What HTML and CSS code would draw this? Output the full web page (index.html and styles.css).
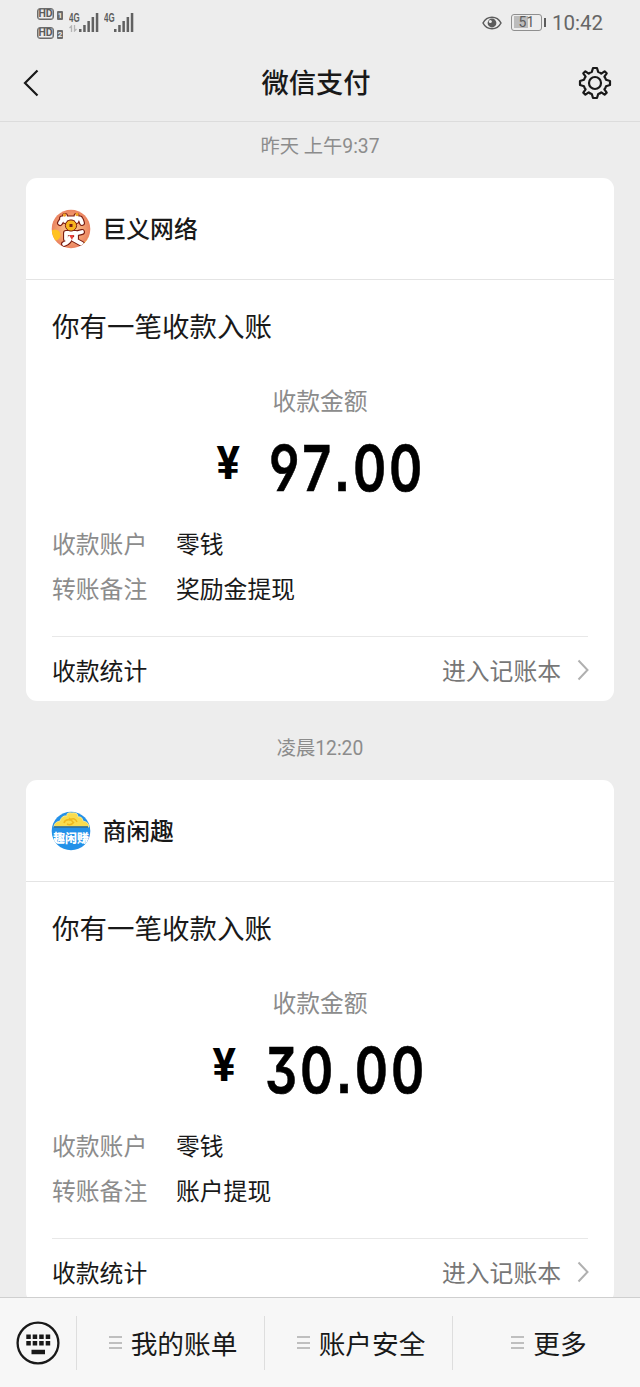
FILE: index.html
```html
<!DOCTYPE html>
<html lang="zh-CN">
<head>
<meta charset="utf-8">
<title>微信支付</title>
<link rel="stylesheet" href="styles.css">
</head>
<body>
<div class="app">
  <div class="status">
    <div class="hd-list">
      <div class="hd"><span class="hd-box">HD</span><span class="hd-num">1</span></div>
      <div class="hd"><span class="hd-box">HD</span><span class="hd-num">2</span></div>
    </div>
    <div class="signal">
      <div class="net"><span>4G</span>
        <svg width="8" height="7" viewBox="0 0 8 7" fill="none" stroke="#b5b5b5" stroke-width="1.3"><path d="M2.5 7V1L.5 3M5.5 0v6l2-2"/></svg>
      </div>
      <svg class="bars" width="20" height="19" viewBox="0 0 20 19" fill="#616161"><path d="M0 16h2.500v3H0zM4.200 12h2.500v7H4.200zM8.400 8h2.500v11H8.400zM12.600 4h2.500v15h-2.500zM16.800 0h2.500v19h-2.500z"/></svg>
    </div>
    <div class="signal second">
      <div class="net"><span>4G</span></div>
      <svg class="bars" width="20" height="19" viewBox="0 0 20 19" fill="#616161"><path d="M0 16h2.500v3H0zM4.200 12h2.500v7H4.200zM8.400 8h2.500v11H8.400zM12.600 4h2.500v15h-2.500zM16.800 0h2.500v19h-2.500z"/></svg>
    </div>
    <div class="status-right">
      <svg width="20" height="14" viewBox="0 0 20 14" fill="none" stroke="#5c5c5c" stroke-width="1.5"><path d="M1 7C5-.7 15-.7 19 7 15 14.700 5 14.700 1 7z"/><circle cx="10" cy="7" r="4.400" fill="#5c5c5c" stroke="none"/><circle cx="8.300" cy="5.600" r="1.500" fill="#ededed" stroke="none"/></svg>
      <div class="battery"><span>51</span></div><i class="battery-tip"></i>
      <span class="clock">10:42</span>
    </div>
  </div>
  <div class="nav">
    <svg class="back" width="16" height="28" viewBox="0 0 16 28" fill="none" stroke="#191919" stroke-width="2.200"><path d="M14.500 1.500 2 14l12.500 12.500"/></svg>
    <h1>微信支付</h1>
    <svg class="gear" width="34" height="34" viewBox="-17 -17 34 34" fill="none" stroke="#191919" stroke-width="2.200" stroke-linejoin="round">
      <path d="M-2 -15H2L3.200 -11Q5 -10.600 6.300 -9.400L9.600 -11.700 11.700 -9.600 9.400 -6.300Q10.600 -5 11 -3.200L15 -2V2L11 3.200Q10.600 5 9.400 6.300L11.700 9.600 9.600 11.700 6.300 9.400Q5 10.600 3.200 11L2 15H-2L-3.200 11Q-5 10.600 -6.300 9.400L-9.600 11.700 -11.700 9.600 -9.400 6.300Q-10.600 5 -11 3.200L-15 2V-2L-11 -3.200Q-10.600 -5 -9.400 -6.300L-11.700 -9.600 -9.600 -11.700 -6.300 -9.400Q-5 -10.600 -3.200 -11Z"/>
      <circle r="6"/>
    </svg>
  </div>
  <div class="feed">
    <div class="time first">昨天 上午9:37</div>
    <div class="card">
      <div class="card-head">
        <svg class="avatar" width="40" height="40" viewBox="0 0 40 40">
          <defs><radialGradient id="peach"><stop offset="0" stop-color="#ffd39a"/><stop offset=".6" stop-color="#f3a172"/><stop offset="1" stop-color="#e9805f"/></radialGradient><clipPath id="round"><circle cx="20" cy="20" r="19.300"/></clipPath></defs>
          <g clip-path="url(#round)"><rect width="40" height="40" fill="url(#peach)"/>
          <circle cx="4" cy="26" r="5.500" fill="#ffc21f"/><path d="M30 34q6-1 8-7v10z" fill="#f9c63c"/>
          <g fill="none" stroke-linecap="round" stroke-linejoin="round"><g stroke="#7b1d12" stroke-width="6"><path d="M11 9.500h18M14 7v5M25.500 7v5M9 14l2-3M31 14l-1-3M15 24h10v6M15 24v6M19 28q0 5-6 7M22 30l9 5M27 24l4-1"/></g>
          <g stroke="#fff" stroke-width="3.800"><path d="M11 9.500h18M14 7v5M25.500 7v5M9 14l2-3M31 14l-1-3M15 24h10v6M15 24v6M19 28q0 5-6 7M22 30l9 5M27 24l4-1"/></g></g>
          <circle cx="13.500" cy="6" r="1.700" fill="#f0a328"/><circle cx="26" cy="5.500" r="1.700" fill="#f0a328"/>
          <circle cx="20" cy="16.500" r="5.600" fill="#f7b51d" stroke="#7b1d12"/><rect x="18.500" y="15" width="3" height="3" fill="#7b1d12"/><path d="M18 26h5l-2 5z" fill="#e5403b"/></g>
        </svg>
        <h2>巨义网络</h2>
      </div>
      <div class="card-body">
        <div class="headline">你有一笔收款入账</div>
        <div class="label-center">收款金额</div>
        <div class="amount"><span class="yen">¥</span><span class="digits">97.00</span></div>
        <dl>
          <dt>收款账户</dt><dd>零钱</dd>
          <dt>转账备注</dt><dd>奖励金提现</dd>
        </dl>
        <div class="card-foot"><span>收款统计</span><span class="link">进入记账本</span>
          <svg width="12" height="22" viewBox="0 0 12 22" fill="none" stroke="#b0b0b0" stroke-width="2"><path d="M1.500 1.500 10.500 11l-9 9.500"/></svg></div>
      </div>
    </div>
    <div class="time">凌晨12:20</div>
    <div class="card">
      <div class="card-head">
        <svg class="avatar" width="40" height="40" viewBox="0 0 40 40">
          <g clip-path="url(#round)"><rect width="40" height="40" fill="#2491e8"/>
          <path d="M3 16q0-5 6-6Q11 4 16 5q-1-4 5-3 6-1 6 4 4-1 5 4 6 1 6 6z" fill="#f9dc4e" stroke="#fff0a0" stroke-width=".8"/><path d="M13 12q1-4 6-3 5-3 7 2M16 13q4 2 7-2M18 7l4 4" fill="none" stroke="#eeb81e" stroke-width="1.500"/><path d="M3 16h34" stroke="#176098" stroke-width="1.500"/>
          <text class="logo-text" x="20" y="32" text-anchor="middle">趣闲赚</text></g>
        </svg>
        <h2>商闲趣</h2>
      </div>
      <div class="card-body">
        <div class="headline">你有一笔收款入账</div>
        <div class="label-center">收款金额</div>
        <div class="amount"><span class="yen">¥</span><span class="digits">30.00</span></div>
        <dl>
          <dt>收款账户</dt><dd>零钱</dd>
          <dt>转账备注</dt><dd>账户提现</dd>
        </dl>
        <div class="card-foot"><span>收款统计</span><span class="link">进入记账本</span>
          <svg width="12" height="22" viewBox="0 0 12 22" fill="none" stroke="#b0b0b0" stroke-width="2"><path d="M1.500 1.500 10.500 11l-9 9.500"/></svg></div>
      </div>
    </div>
  </div>
  <div class="menu">
    <div class="keyboard">
      <svg width="44" height="44" viewBox="0 0 44 44"><circle cx="22" cy="22" r="20.400" fill="none" stroke="#191919" stroke-width="2.300"/><path d="M10.300 13.500h4.500v4.500h-4.500zM16.700 13.500h4.500v4.500h-4.500zM23.200 13.500h4.500v4.500h-4.500zM29.700 13.500h4.500v4.500h-4.500zM10.300 20h4.500v4.500h-4.500zM16.700 20h4.500v4.500h-4.500zM23.200 20h4.500v4.500h-4.500zM29.700 20h4.500v4.500h-4.500zM15.500 28.800h13.500v4.400H15.500z" fill="#191919"/></svg>
    </div>
    <div class="menu-item"><i class="lines"></i>我的账单</div>
    <div class="menu-item"><i class="lines"></i>账户安全</div>
    <div class="menu-item"><i class="lines"></i>更多</div>
  </div>
</div>
</body>
</html>
```
FILE: styles.css
```css
* { box-sizing: border-box; }
body { margin: 0; background: #ededed; font-family: Roboto, "Noto Sans CJK SC", sans-serif; color: #191919; }
h1, h2, dl, dd { margin: 0; }
svg { display: block; flex: none; }
.app { width: 640px; height: 1387px; display: flex; flex-direction: column; overflow: hidden; }

.status { height: 44px; flex: none; display: flex; padding: 7px 37px 0 37px; color: #5c5c5c; }
.hd-list { display: flex; flex-direction: column; gap: 7px; width: 32px; padding-top: 1px; }
.hd { display: flex; align-items: flex-end; gap: 3px; height: 12px; }
.hd-box { width: 17px; height: 12px; border: 1px solid #6b6b6b; box-shadow: inset 0 0 0 .5px #6b6b6b; border-radius: 3px; font: 700 10.500px/10px Roboto, sans-serif; display: flex; justify-content: center; }
.hd-num { width: 6px; height: 9px; border-radius: 1px; background: #6b6b6b; color: #ededed; font: 700 8px/9px Roboto, sans-serif; text-align: center; }
.signal { display: flex; align-items: flex-start; padding-top: 6px; }
.second { margin-left: 5px; }
.net { width: 11px; font: 700 12px/11px "Liberation Sans", sans-serif; }
.net span { display: block; transform: scaleX(.66); transform-origin: left; white-space: nowrap; }
.net svg { margin-top: 1px; }
.signal .bars { margin-left: -1px; }
.status-right { margin-left: auto; height: 31px; display: flex; align-items: center; }
.battery { width: 31px; height: 17px; margin-left: 9px; border: 1.5px solid #8f8f8f; border-radius: 3px; padding: 1px; font-size: 14px; line-height: 13px; text-align: center; background: linear-gradient(#bcbcbc, #bcbcbc) 2px 1px / 14px 12px no-repeat; }
.battery-tip { width: 2px; height: 9px; margin: 0 6px 0 2px; background: #5c5c5c; }
.clock { font-size: 20.500px; line-height: 24px; color: #666; }

.nav { height: 78px; flex: none; display: flex; align-items: center; padding: 0 28px 0 23px; border-bottom: 1px solid #dcdcdc; }
.nav h1 { flex: 1; padding: 2px 0 0 15px; font-size: 27.300px; line-height: 36px; font-weight: 500; text-align: center; }

.feed { flex: 1; min-height: 0; overflow: hidden; padding: 0 26px; }
.time { height: 79px; padding-top: 32px; font-size: 19.300px; line-height: 32px; text-align: center; color: #8c8c8c; }
.time.first { height: 56px; padding-top: 9px; }
.card { height: 523px; border-radius: 11px; background: #fff; }
.card-head { height: 102px; display: flex; align-items: center; gap: 11.500px; padding-left: 25px; border-bottom: 1px solid #e4e4e4; }
h2 { padding-top: 2px; font-size: 23.800px; line-height: 32px; font-weight: 500; }
.card-body { padding: 28px 26px 0; }
.headline { font-size: 27.500px; line-height: 40px; }
.label-center { margin-top: 38px; font-size: 23.800px; line-height: 32px; color: #8c8c8c; text-align: center; }
.amount { height: 94px; display: flex; justify-content: center; color: #000; }
.yen { padding-top: 18px; margin-right: 28px; font: 700 46px/54px Roboto, sans-serif; transform: scaleX(.95); }
.digits { padding-top: 10px; margin-right: -40px; font: 600 63px/80px Inter, sans-serif; font-kerning: none; font-feature-settings: "ss01", "cv04", "cv09", "ss07"; letter-spacing: 3.500px; transform: scaleX(.8); transform-origin: left; -webkit-text-stroke: .6px #000; }
dl { display: grid; grid-template-columns: 124px 1fr; row-gap: 12px; padding-top: 17px; font-size: 23.800px; line-height: 33px; }
dt { color: #8c8c8c; }
.card-foot { height: 65px; margin-top: 29px; border-top: 1px solid #e8e8e8; display: flex; align-items: center; font-size: 23.800px; }
.link { margin-left: auto; margin-right: 15px; color: #777; }
.card-foot svg { margin: 1px -1px 0 1px; }
.logo-text { font: 900 12px "Noto Sans CJK SC", sans-serif; fill: #fff; }

.menu { height: 90px; flex: none; display: flex; align-items: center; background: #f7f7f7; border-top: 1px solid #cfcfcf; }
.keyboard { width: 76px; padding-left: 16px; }
.menu-item { flex: 1; height: 54px; display: flex; align-items: center; justify-content: center; gap: 9px; border-left: 1px solid #dedede; font-size: 26.700px; padding-left: 5px; }
.lines { width: 13px; height: 13px; border-top: 2px solid #bfbfbf; border-bottom: 2px solid #bfbfbf; background: linear-gradient(#bfbfbf, #bfbfbf) 0 50% / 100% 2px no-repeat; }
```
